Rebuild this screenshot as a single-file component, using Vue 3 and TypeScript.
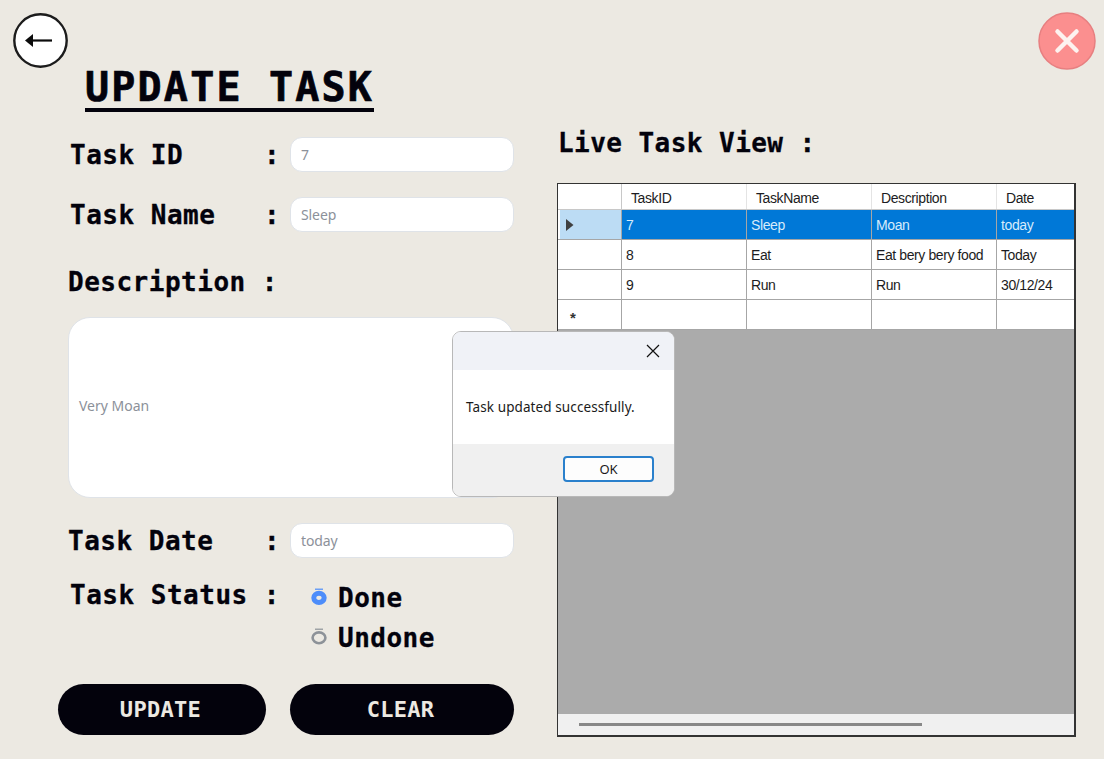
<template>
  <div class="page">
    <div class="topbar">
      <button class="back-btn" type="button">
        <svg width="55" height="55" viewBox="0 0 55 55">
          <circle cx="27.5" cy="27.5" r="26.2" fill="#fff" stroke="#1c1c1c" stroke-width="2.4" />
          <path d="M14 27.5H39" stroke="#0b0b0b" stroke-width="2.2" />
          <path d="M12 27.5L20 21V34Z" fill="#0b0b0b" />
        </svg>
      </button>
      <button class="close-btn" type="button">
        <svg width="58" height="58" viewBox="0 0 58 58">
          <circle cx="29" cy="29" r="28" fill="#fb8f8f" stroke="#e77f80" stroke-width="1.5" />
          <path d="M19.5 19.5L38.5 38.5M38.5 19.5L19.5 38.5" stroke="#fdf3f0" stroke-width="4.5" stroke-linecap="round" />
        </svg>
      </button>
    </div>

    <div class="main">
      <section class="left">
        <h1 class="title">UPDATE TASK</h1>

        <div class="form-row first">
          <label>Task ID</label>
          <span class="colon">:</span>
          <input class="field" :value="task.id" readonly />
        </div>
        <div class="form-row">
          <label>Task Name</label>
          <span class="colon">:</span>
          <input class="field" :value="task.name" readonly />
        </div>

        <div class="desc-label">Description :</div>
        <div class="desc-box"><span>{{ task.description }}</span></div>

        <div class="form-row date-row">
          <label>Task Date</label>
          <span class="colon">:</span>
          <input class="field" :value="task.date" readonly />
        </div>

        <div class="status-row">
          <div class="status-label">Task Status :</div>
          <div class="status-options">
            <div v-for="opt in statusOptions" :key="opt" class="status-option">
              <svg v-if="opt === task.status" width="18" height="18" viewBox="0 0 18 18" class="radio">
                <ellipse cx="9" cy="9.8" rx="5.2" ry="4.6" fill="none" stroke="#4d8dfa" stroke-width="5" />
                <path d="M5 1.2H13" stroke="#4d8dfa" stroke-width="1.2" />
              </svg>
              <svg v-else width="18" height="18" viewBox="0 0 18 18" class="radio">
                <ellipse cx="9" cy="9.8" rx="6.4" ry="5.4" fill="none" stroke="#8d9298" stroke-width="2.6" />
                <path d="M5 1.2H13" stroke="#8d9298" stroke-width="1.2" />
              </svg>
              <span>{{ opt }}</span>
            </div>
          </div>
        </div>

        <div class="actions">
          <button class="pill update" type="button">UPDATE</button>
          <button class="pill clear" type="button">CLEAR</button>
        </div>
      </section>

      <section class="right">
        <h2 class="live-title">Live Task View :</h2>
        <div class="grid-view">
          <div class="grid-rows">
            <div class="grid-row head">
              <div class="row-head"></div>
              <div v-for="col in columns" :key="col" class="cell">{{ col }}</div>
            </div>
            <div v-for="(row, i) in rows" :key="row.id" class="grid-row" :class="{ selected: i === 0 }">
              <div class="row-head">
                <svg v-if="i === 0" width="8" height="12" viewBox="0 0 8 12"><path d="M0 0L7.5 6L0 12Z" fill="#404040" /></svg>
              </div>
              <div class="cell">{{ row.id }}</div>
              <div class="cell">{{ row.name }}</div>
              <div class="cell">{{ row.description }}</div>
              <div class="cell">{{ row.date }}</div>
            </div>
            <div class="grid-row new-row">
              <div class="row-head"><span class="star">*</span></div>
              <div v-for="col in columns" :key="col" class="cell"></div>
            </div>
          </div>
          <div class="grid-empty"></div>
          <div class="scrollbar"><div class="thumb"></div></div>
        </div>
      </section>
    </div>

    <div class="dialog">
      <div class="dialog-head">
        <svg width="14" height="14" viewBox="0 0 14 14"><path d="M1 1L13 13M13 1L1 13" stroke="#111" stroke-width="1.2" /></svg>
      </div>
      <div class="dialog-body">Task updated successfully.</div>
      <div class="dialog-foot">
        <button class="ok-btn" type="button">OK</button>
      </div>
    </div>
  </div>
</template>

<script setup lang="ts">
import { reactive } from 'vue'

interface TaskRow {
  id: number
  name: string
  description: string
  date: string
}

const columns = ['TaskID', 'TaskName', 'Description', 'Date']
const statusOptions = ['Done', 'Undone']

const rows: TaskRow[] = [
  { id: 7, name: 'Sleep', description: 'Moan', date: 'today' },
  { id: 8, name: 'Eat', description: 'Eat bery bery food', date: 'Today' },
  { id: 9, name: 'Run', description: 'Run', date: '30/12/24' }
]

const task = reactive({
  id: '7',
  name: 'Sleep',
  description: 'Very Moan',
  date: 'today',
  status: 'Done'
})
</script>

<style>
html, body {
  margin: 0;
  background: #ece9e2;
}
</style>

<style scoped>
.page {
  position: relative;
  width: 1104px;
  height: 759px;
  box-sizing: border-box;
  padding-top: 12px;
  background: #ece9e2;
  overflow: hidden;
  color: #03020c;
  font-family: "DejaVu Sans Mono", monospace;
}

.topbar {
  display: flex;
  justify-content: space-between;
  height: 56px;
  padding: 0 8px 0 13px;
}

.topbar button {
  padding: 0;
  border: 0;
  background: none;
  height: 58px;
}

.back-btn {
  margin-top: 1px;
}

.main {
  display: flex;
}

.left {
  width: 446px;
  margin-left: 68px;
}

.title {
  width: 289px;
  margin: -1px 0 0 17px;
  font-size: 40px;
  line-height: 41px;
  font-weight: 700;
  letter-spacing: 2.2px;
  white-space: nowrap;
  border-bottom: 4px solid #03020c;
  -webkit-text-stroke: 0.7px #03020c;
}

.form-row {
  display: grid;
  grid-template-columns: 194px 26px 1fr;
  align-items: center;
  height: 35px;
  margin-top: 25px;
  padding-left: 2px;
  font-size: 26px;
  font-weight: 700;
  letter-spacing: 0.5px;
  -webkit-text-stroke: 0.3px #03020c;
}

.form-row.date-row {
  padding-left: 0;
  grid-template-columns: 196px 26px 1fr;
}

.colon {
  text-align: left;
}

.field {
  width: 100%;
  height: 35px;
  box-sizing: border-box;
  padding: 0 10px;
  border: 1px solid #dfe3e8;
  border-radius: 12px;
  background: #fff;
  outline: none;
  color: #8c919a;
  font-family: "Noto Sans", sans-serif;
  font-size: 14px;
  letter-spacing: -0.1px;
  -webkit-text-stroke: 0;
}

.desc-label {
  height: 32px;
  margin-top: 33px;
  font-size: 26px;
  line-height: 34px;
  font-weight: 700;
  letter-spacing: 0.5px;
  -webkit-text-stroke: 0.3px #03020c;
}

.desc-box {
  display: flex;
  align-items: center;
  height: 181px;
  box-sizing: border-box;
  margin-top: 20px;
  padding: 0 10px 4px;
  border: 1px solid #dfe3e8;
  border-radius: 22px;
  background: #fff;
  color: #8c919a;
  font-family: "Noto Sans", sans-serif;
  font-size: 14px;
}

.status-row {
  display: flex;
  margin-top: 20px;
  padding-left: 2px;
  font-size: 26px;
  font-weight: 700;
  letter-spacing: 0.5px;
  -webkit-text-stroke: 0.3px #03020c;
}

.status-label {
  width: 240px;
  line-height: 34px;
}

.status-options {
  display: flex;
  flex-direction: column;
  gap: 6px;
  margin-top: 3px;
}

.status-option {
  display: flex;
  align-items: center;
  gap: 10px;
  height: 34px;
}

.radio {
  flex: none;
  margin-top: -3px;
}

.actions {
  display: flex;
  gap: 24px;
  margin: 29px 0 0 -10px;
}

.pill {
  height: 51px;
  padding: 0 3px 0 0;
  border: 0;
  border-radius: 26px;
  background: #03020c;
  color: #ece9e2;
  font-family: "DejaVu Sans Mono", monospace;
  font-size: 22px;
  font-weight: 700;
  letter-spacing: 0.3px;
}

.pill.update {
  width: 208px;
}

.pill.clear {
  width: 224px;
}

.right {
  margin-left: 43px;
  width: 519px;
}

.live-title {
  margin: 59px 0 0 1px;
  height: 32px;
  font-size: 26px;
  line-height: 32px;
  font-weight: 700;
  letter-spacing: 0.45px;
  -webkit-text-stroke: 0.3px #03020c;
}

.grid-view {
  display: flex;
  flex-direction: column;
  height: 554px;
  box-sizing: border-box;
  margin-top: 24px;
  border: 2px solid #333;
  border-width: 1.5px 2px 2px 1.5px;
  background: #ababab;
  font-family: "Liberation Sans", sans-serif;
  font-size: 14px;
  letter-spacing: -0.4px;
  color: #1c1c22;
}

.grid-row {
  display: grid;
  grid-template-columns: 63.5px 125px 125px 125px 1fr;
  height: 30px;
  box-sizing: border-box;
  border-bottom: 1.5px solid #a6a6a6;
  background: #fff;
}

.grid-row.head {
  height: 25.5px;
  border-bottom-color: #c8c8c8;
}

.row-head {
  display: flex;
  align-items: center;
  padding-left: 8px;
  border-right: 1.5px solid #a6a6a6;
}

.cell {
  display: flex;
  align-items: center;
  padding: 1px 0 0 4.5px;
  border-right: 1.5px solid #a6a6a6;
  white-space: nowrap;
  overflow: hidden;
}

.cell:last-child {
  border-right: 0;
}

.head .cell {
  padding: 3px 0 0 9.5px;
  border-right-color: #e4e4e4;
}

.head .row-head {
  border-right-color: #c8c8c8;
}

.selected .row-head {
  background: #bcdcf4;
  margin-left: 2px;
  padding: 2px 0 0 6px;
}

.selected .cell {
  background: #0078d7;
  color: #d6ebfb;
}

.star {
  margin: 7px 0 0 4px;
  font-size: 15px;
  font-weight: 700;
  color: #333;
}

.grid-empty {
  flex: 1;
}

.scrollbar {
  display: flex;
  align-items: center;
  height: 21px;
  padding-left: 21px;
  background: #f0f0f0;
}

.thumb {
  width: 343px;
  height: 3px;
  background: #888;
}

.dialog {
  position: absolute;
  left: 452px;
  top: 331px;
  display: flex;
  flex-direction: column;
  width: 223px;
  height: 166px;
  box-sizing: border-box;
  border: 1px solid #b8b8b8;
  border-radius: 9px;
  overflow: hidden;
  background: #fff;
}

.dialog-head {
  display: flex;
  align-items: center;
  justify-content: flex-end;
  height: 38px;
  padding-right: 14px;
  background: #f0f2f7;
}

.dialog-body {
  display: flex;
  align-items: center;
  flex: 1;
  padding-left: 13px;
  font-family: "Noto Sans", sans-serif;
  font-size: 13.5px;
  letter-spacing: 0.1px;
  color: #1a1a1a;
}

.dialog-foot {
  display: flex;
  justify-content: flex-end;
  align-items: center;
  height: 52px;
  padding: 0 20px 2px 0;
  box-sizing: border-box;
  background: #f0f0f0;
}

.ok-btn {
  width: 91px;
  height: 26px;
  padding: 0;
  border: 2px solid #2a80cc;
  border-radius: 4px;
  background: #fdfdfd;
  font-family: "Noto Sans", sans-serif;
  font-size: 13px;
  color: #1a1a1a;
}
</style>
